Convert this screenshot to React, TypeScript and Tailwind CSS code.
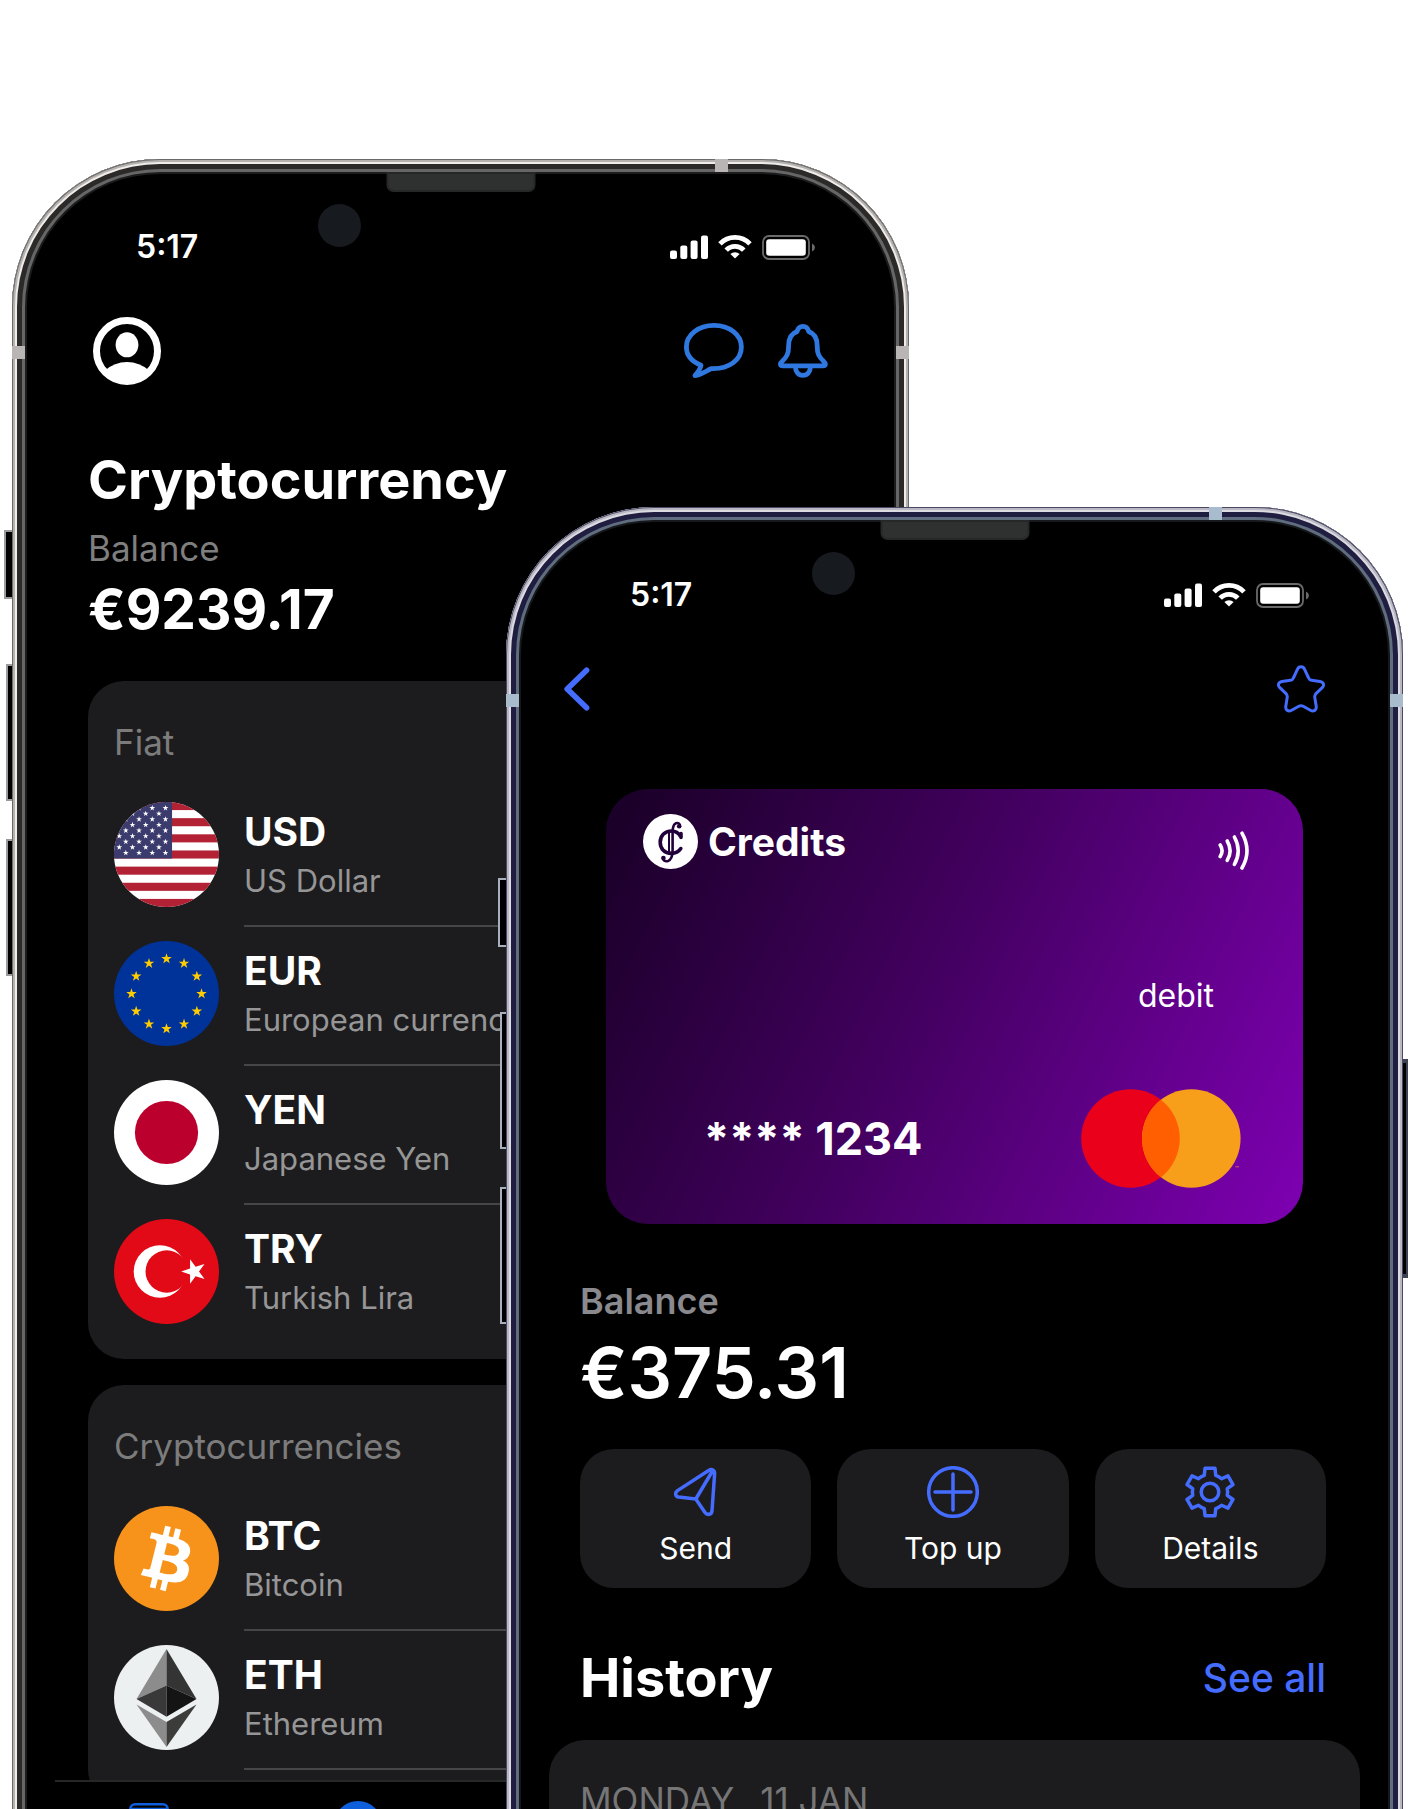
import type { ReactNode } from "react";

type Tone = "graphite" | "navy";

const frames: Record<Tone, { ring: string; band: string; key: string }> = {
  graphite: {
    ring: "shadow-[inset_0_0_0_1px_#6b6a69,inset_0_0_0_3px_#b4b1af,inset_0_0_0_5px_#efecea,inset_0_0_0_10px_#2c2a29,inset_0_0_0_13px_#676666,inset_0_0_0_15px_#1c1c1c]",
    band: "bg-[#b9b5b4]",
    key: "border-[#9b9b9b]",
  },
  navy: {
    ring: "shadow-[inset_0_0_0_1px_#4a4965,inset_0_0_0_3px_#b9b8c2,inset_0_0_0_5px_#dcdbe2,inset_0_0_0_10px_#1f1d40,inset_0_0_0_13px_#5f6d7e,inset_0_0_0_15px_#16181c]",
    band: "bg-[#a9bccd]",
    key: "border-[#a9b0bd]",
  },
};

function Phone({ tone, label, className, children }: { tone: Tone; label: string; className: string; children: ReactNode }) {
  const f = frames[tone];
  return (
    <section aria-label={label} className={`relative flex min-w-0 flex-col rounded-t-[148px] bg-black ${className}`}>
      <i className={`absolute top-[371px] -left-[8px] h-[69px] w-[9px] border-2 border-r-0 bg-black ${f.key}`} />
      <i className={`absolute top-[505px] -left-[6px] h-[137px] w-[7px] border-2 border-r-0 bg-black ${f.key}`} />
      <i className={`absolute top-[680px] -left-[6px] h-[137px] w-[7px] border-2 border-r-0 bg-black ${f.key}`} />
      <i className="absolute top-[552px] -right-[5px] h-[219px] w-[6px] border-y-4 border-r-2 border-[#3d4350] bg-black" />
      <div className={`pointer-events-none absolute inset-x-0 top-0 -bottom-10 rounded-t-[148px] ${f.ring}`} />
      <i className={`absolute top-0 right-[181px] h-[13px] w-[13px] ${f.band}`} />
      <i className={`absolute top-[187px] left-0 h-[13px] w-[13px] ${f.band}`} />
      <i className={`absolute top-[187px] right-0 h-[13px] w-[13px] ${f.band}`} />
      <i className="absolute top-[13px] left-1/2 h-[20px] w-[149px] -translate-x-1/2 rounded-b-[7px] border-2 border-[#262727] bg-[#2f3030]" />
      <i className="absolute top-[45px] left-1/2 -ml-[143px] size-[43px] rounded-full bg-[#171a1e]" />
      <StatusBar />
      {children}
    </section>
  );
}

function StatusBar() {
  return (
    <div className="flex h-[108px] shrink-0 items-end justify-between pt-[68px] pr-[94px] pl-[124px] text-white">
      <time className="text-[32px] leading-[40px] font-semibold">5:17</time>
      <div className="flex h-[40px] items-center gap-[10px]">
        <svg width="38" height="24" viewBox="0 0 38 24" fill="#fff" role="img" aria-label="Signal">
          <rect x="0" y="15.5" width="7" height="8.5" rx="2" />
          <rect x="10.3" y="10.5" width="7" height="13.5" rx="2" />
          <rect x="20.6" y="5.5" width="7" height="18.5" rx="2" />
          <rect x="31" y="0.5" width="7" height="23.5" rx="2" />
        </svg>
        <svg width="34" height="24" viewBox="0 0 34 24" fill="none" stroke="#fff" strokeWidth="4.8" role="img" aria-label="Wi-Fi">
          <path d="M2 8.8A20.8 20.8 0 0 1 32 8.8" />
          <path d="M8.2 15.2A12 12 0 0 1 25.8 15.2" />
          <path d="M17 23.5L12.4 19.1A6.6 6.6 0 0 1 21.6 19.1Z" fill="#fff" stroke="none" />
        </svg>
        <svg width="53" height="25" viewBox="0 0 53 25" role="img" aria-label="Battery">
          <rect x="1" y="1" width="46" height="23" rx="6" fill="none" stroke="#6a6a6a" strokeWidth="1.8" />
          <rect x="4.2" y="4.2" width="39.6" height="16.6" rx="3" fill="#fff" />
          <path d="M50 8.5Q53 10 53 12.5T50 16.5Z" fill="#6a6a6a" />
        </svg>
      </div>
    </div>
  );
}

function starPoints(cx: number, cy: number, r: number, turn = -90, ratio = 0.382) {
  return Array.from({ length: 10 }, (_, i) => {
    const a = ((turn + i * 36) * Math.PI) / 180;
    const q = i % 2 ? r * ratio : r;
    return `${(cx + q * Math.cos(a)).toFixed(2)},${(cy + q * Math.sin(a)).toFixed(2)}`;
  }).join(" ");
}

function Coin({ id, children }: { id: string; children: ReactNode }) {
  return (
    <svg className="size-[105px] shrink-0" viewBox="0 0 104 104" aria-hidden="true">
      <clipPath id={id}>
        <circle cx="52" cy="52" r="52" />
      </clipPath>
      <g clipPath={`url(#${id})`}>{children}</g>
    </svg>
  );
}

const UsFlag = () => (
  <Coin id="us">
    <rect width="104" height="104" fill="#fff" />
    {[0, 2, 4, 6, 8, 10, 12].map((i) => (
      <rect key={i} y={i * 8} width="104" height="8" fill="#b22234" />
    ))}
    <rect width="57.5" height="56" fill="#3c3b6e" />
    {Array.from({ length: 9 }, (_, r) =>
      [0, 1, 2, 3].map((c) => (
        <polygon key={`${r}-${c}`} fill="#fff" points={starPoints((r % 2 ? 44.5 : 51) - c * 13.1, 6 + r * 5.55, 3)} />
      )),
    )}
  </Coin>
);

const EuFlag = () => (
  <Coin id="eu">
    <rect width="104" height="104" fill="#039" />
    {Array.from({ length: 12 }, (_, i) => (
      <polygon
        key={i}
        fill="#fc0"
        points={starPoints(52 + 34.7 * Math.sin((i * Math.PI) / 6), 52.3 - 34.7 * Math.cos((i * Math.PI) / 6), 5.5)}
      />
    ))}
  </Coin>
);

const JpFlag = () => (
  <Coin id="jp">
    <rect width="104" height="104" fill="#fff" />
    <circle cx="52" cy="52" r="31.3" fill="#bc002d" />
  </Coin>
);

const TrFlag = () => (
  <Coin id="tr">
    <rect width="104" height="104" fill="#e30a17" />
    <circle cx="45.5" cy="52" r="26" fill="#fff" />
    <circle cx="52.2" cy="52" r="21" fill="#e30a17" />
    <polygon fill="#fff" points={starPoints(79.3, 52, 12.8, 180)} />
  </Coin>
);

const Btc = () => (
  <Coin id="btc">
    <rect width="104" height="104" fill="#f7931a" />
    <g transform="scale(3.25)">
      <path
        fill="#fff"
        d="M23.189 14.02c.314-2.096-1.283-3.223-3.465-3.975l.708-2.84-1.728-.43-.69 2.765c-.454-.114-.92-.22-1.385-.326l.695-2.783L15.596 6l-.708 2.839c-.376-.086-.746-.17-1.104-.26l.002-.009-2.384-.595-.46 1.846s1.283.294 1.256.312c.7.175.826.638.805 1.006l-.806 3.235c.048.012.11.03.18.057l-.183-.045-1.13 4.532c-.086.212-.303.531-.793.41.018.025-1.256-.313-1.256-.313l-.858 1.978 2.25.561c.418.105.828.215 1.231.318l-.715 2.872 1.727.43.708-2.84c.472.127.93.245 1.378.357l-.706 2.828 1.728.43.715-2.866c2.948.558 5.164.333 6.097-2.333.752-2.146-.037-3.385-1.588-4.192 1.13-.26 1.98-1.003 2.207-2.538zm-3.95 5.538c-.533 2.147-4.148.986-5.32.695l.95-3.805c1.172.293 4.929.872 4.37 3.11zm.535-5.569c-.487 1.953-3.495.96-4.47.717l.86-3.45c.975.243 4.118.696 3.61 2.733z"
      />
    </g>
  </Coin>
);

const Eth = () => (
  <Coin id="eth">
    <rect width="104" height="104" fill="#ecf0f1" />
    <path d="M52 4L22.3 53.5L52 40Z" fill="#8c8c8c" />
    <path d="M52 4L81.7 53.5L52 40Z" fill="#343434" />
    <path d="M52 40L22.3 53.5L52 71Z" fill="#393939" />
    <path d="M52 40L81.7 53.5L52 71Z" fill="#141414" />
    <path d="M22.3 59L52 76.3V101Z" fill="#8c8c8c" />
    <path d="M81.7 59L52 76.3V101Z" fill="#3c3c3b" />
  </Coin>
);

type Asset = { code: string; name: string; icon: ReactNode };

const fiat: Asset[] = [
  { code: "USD", name: "US Dollar", icon: <UsFlag /> },
  { code: "EUR", name: "European currency", icon: <EuFlag /> },
  { code: "YEN", name: "Japanese Yen", icon: <JpFlag /> },
  { code: "TRY", name: "Turkish Lira", icon: <TrFlag /> },
];

const crypto: Asset[] = [
  { code: "BTC", name: "Bitcoin", icon: <Btc /> },
  { code: "ETH", name: "Ethereum", icon: <Eth /> },
];

function AssetCard({ title, assets, open }: { title: string; assets: Asset[]; open?: boolean }) {
  return (
    <div className="rounded-[36px] bg-[#1c1c1e] px-[26px] pt-[40px] pb-[35px]">
      <h2 className="text-[35px] leading-[42px] text-[#7c7c7d]">{title}</h2>
      <ul className="mt-[39px] flex flex-col gap-[14px]">
        {assets.map((a, i) => (
          <li key={a.code} className="flex gap-[25px]">
            {a.icon}
            <div
              className={
                open || i < assets.length - 1
                  ? "h-[125px] min-w-0 flex-1 border-b-2 border-[#464648] pt-[6px]"
                  : "h-[105px] min-w-0 flex-1 pt-[6px]"
              }
            >
              <p className="text-[39px] leading-[48px] font-bold text-white">{a.code}</p>
              <p className="mt-[6px] truncate text-[31px] leading-[38px] text-[#969697]">{a.name}</p>
            </div>
          </li>
        ))}
      </ul>
    </div>
  );
}

function WalletPhone() {
  return (
    <Phone tone="graphite" label="Wallet" className="col-start-2 col-end-4 row-start-1 mt-[159px]">
      <div className="mt-[50px] flex h-[68px] shrink-0 items-center justify-between px-[81px]">
        <button type="button" aria-label="Profile">
          <svg width="68" height="68" viewBox="0 0 68 68" className="block">
            <circle cx="34" cy="34" r="30.5" fill="none" stroke="#fff" strokeWidth="7" />
            <ellipse cx="34" cy="27.8" rx="11.4" ry="12.5" fill="#fff" />
            <path d="M12 53.5Q21.5 45 34 45T56 53.5L50 62Q34 71 18 62Z" fill="#fff" />
          </svg>
        </button>
        <div className="flex items-center gap-[34px]">
          <button type="button" aria-label="Messages">
            <svg width="60" height="56" viewBox="0 0 60 56" fill="none" stroke="#2f78e0" strokeWidth="4.8" strokeLinejoin="round" className="block">
              <path d="M27.5 45.6C22.5 47.5 18 52 11 52.6C14 49 16.5 46 17 42.2C8 38.6 2.4 32 2.4 24C2.4 11.8 14.5 2.4 30 2.4C45.5 2.4 57.4 11.8 57.4 24C57.4 37 45 46.2 27.5 45.6Z" />
            </svg>
          </button>
          <button type="button" aria-label="Notifications">
            <svg width="50" height="54" viewBox="0 0 50 54" fill="none" stroke="#2f78e0" strokeWidth="4.8" strokeLinejoin="round" className="block">
              <path d="M5 41.8C2 41.8 1.6 39.6 4 37.5C9 32.5 10.6 30 10.6 22C10.6 14 13 9.5 19 7.6C20 4 22 2.4 24.9 2.4C27.8 2.4 29.8 4 30.8 7.6C36.8 9.5 39.2 14 39.2 22C39.2 30 40.8 32.5 45.8 37.5C48.2 39.6 47.8 41.8 44.8 41.8Z" />
              <path d="M17.4 42.5C17.4 48 20.5 51.4 24.9 51.4S32.4 48 32.4 42.5" />
            </svg>
          </button>
        </div>
      </div>
      <div className="flex min-h-0 flex-1 flex-col overflow-hidden px-[76px]">
        <h1 className="mt-[63px] text-[54px] leading-[64px] font-bold text-white">Cryptocurrency</h1>
        <p className="mt-[15px] text-[35px] leading-[42px] text-[#7f7f7f]">Balance</p>
        <p className="mt-[8px] text-[55px] leading-[64px] font-bold text-white">€9239.17</p>
        <div className="mt-[40px] flex flex-col gap-[26px]">
          <AssetCard title="Fiat" assets={fiat} />
          <AssetCard title="Cryptocurrencies" assets={crypto} open />
        </div>
      </div>
      <nav aria-label="Tabs" className="mx-[43px] flex h-[29px] shrink-0 items-start overflow-hidden border-t-2 border-[#262828] pt-[19px] pl-[74px]">
        <a href="#cards" aria-label="Cards">
          <svg width="40" height="30" viewBox="0 0 40 30" fill="none" stroke="#0f5fdc" strokeWidth="2.6" className="block">
            <rect x="1.3" y="3.3" width="37.4" height="25" rx="5" />
            <path d="M1.3 8H38.7" />
          </svg>
        </a>
        <a href="#crypto" aria-label="Crypto" className="ml-[165px] block size-[48px] rounded-full bg-[#0f5fdc]" />
      </nav>
    </Phone>
  );
}

const gearPath = (() => {
  const pt = (r: number, deg: number) => {
    const a = ((deg - 90) * Math.PI) / 180;
    return `${(26 + r * Math.cos(a)).toFixed(2)} ${(26 + r * Math.sin(a)).toFixed(2)}`;
  };
  const parts: string[] = [];
  for (let t = 0; t < 360; t += 60) {
    parts.push(`${t ? "L" : "M"}${pt(17.6, t - 19)}L${pt(24.2, t - 12)}L${pt(24.2, t + 12)}L${pt(17.6, t + 19)}`);
    parts.push(`A17.6 17.6 0 0 1 ${pt(17.6, t + 41)}`);
  }
  return parts.join("") + "Z";
})();

const actions = [
  {
    label: "Send",
    icon: (
      <g transform="translate(4 2)">
        <path d="M35 2.3L3.5 22.6C.6 24.6 1.2 28.6 4.6 29.1L21.8 31L31 44.5C33.2 47.6 37.6 46.6 38 43L40.6 6C40.8 2.2 37.8 .6 35 2.3ZM21.8 31L38.2 3.5" />
      </g>
    ),
  },
  {
    label: "Top up",
    icon: (
      <>
        <circle cx="26" cy="26" r="24.3" />
        <path d="M26 8V44M8 26H44" strokeLinecap="round" />
      </>
    ),
  },
  {
    label: "Details",
    icon: (
      <>
        <path d={gearPath} />
        <circle cx="26" cy="26" r="8.8" />
      </>
    ),
  },
];

function BankCard() {
  return (
    <div className="mx-[100px] mt-[76px] flex h-[435px] shrink-0 flex-col rounded-[42px] bg-[linear-gradient(116deg,#1b0029_3%,#430060_46%,#7b00ae_97%)] pt-[25px] text-white">
      <div className="flex items-start justify-between pr-[53px] pl-[37px]">
        <div className="flex items-center gap-[10px]">
          <svg width="55" height="55" viewBox="0 0 55 55" aria-hidden="true">
            <circle cx="27.5" cy="27.5" r="27.5" fill="#fff" />
            <g fill="none" stroke="#22003a" strokeLinecap="round">
              <path d="M38 19.5V23.5M37.5 22.5C35.5 18.8 32 17 28.5 17C21.5 17 17.2 22 17.2 28.2C17.2 34.6 21.5 39.4 28.5 39.4C32.5 39.4 35.8 37.6 37.8 34.6" strokeWidth="3.6" />
              <path d="M36.8 12.6C37.6 9.6 35 8.6 33 9.2C29.8 10.4 29.6 14 29.6 18V36C29.6 42 28.6 45.6 25 47C22.4 47.8 19.4 46.6 20.2 43.4" strokeWidth="2.6" />
              <path d="M26 18V38" strokeWidth="2" />
            </g>
            <circle cx="36.2" cy="12.2" r="2.3" fill="#22003a" />
            <circle cx="20.4" cy="44" r="2.3" fill="#22003a" />
          </svg>
          <span className="text-[39px] leading-[48px] font-bold">Credits</span>
        </div>
        <svg width="32" height="39" viewBox="0 0 32 39" fill="none" stroke="#fff" strokeWidth="3.6" strokeLinecap="round" className="mt-[17px]" role="img" aria-label="Contactless">
          <path d="M2.2 14Q6 19.8 2.2 25.6" />
          <path d="M9.2 10Q15 19.8 9.2 29.4" />
          <path d="M16.4 6Q24 19.8 16.4 33.4" />
          <path d="M24 2.2Q34 19.8 24 37" />
        </svg>
      </div>
      <p className="mt-[108px] pr-[89px] text-right text-[32px] leading-[36px]">debit</p>
      <div className="mt-[75px] flex items-center justify-between pr-[61px] pl-[98px]">
        <span className="text-[45px] leading-[48px] font-bold">**** 1234</span>
        <svg width="161" height="99" viewBox="0 0 161 99" role="img" aria-label="Mastercard">
          <circle cx="49.5" cy="49.5" r="49.3" fill="#eb001b" />
          <circle cx="110.3" cy="49.5" r="49.3" fill="#f79e1b" />
          <path d="M79.9 10.7A49.3 49.3 0 0 1 79.9 88.3A49.3 49.3 0 0 1 79.9 10.7Z" fill="#ff5f00" />
          <text x="154" y="82" fontSize="6" fill="#f79e1b">™</text>
        </svg>
      </div>
    </div>
  );
}

function CardPhone() {
  return (
    <Phone tone="navy" label="Card" className="col-start-3 col-end-5 row-start-1 mt-[507px]">
      <div className="mt-[50px] flex h-[48px] shrink-0 items-center justify-between pr-[78px] pl-[58px]">
        <button type="button" aria-label="Back">
          <svg width="27" height="44" viewBox="0 0 27 44" fill="none" stroke="#446cff" strokeWidth="5.6" strokeLinecap="round" strokeLinejoin="round" className="block">
            <path d="M22.6 3.2L3.2 22L22.6 40.8" />
          </svg>
        </button>
        <button type="button" aria-label="Favourite">
          <svg width="48" height="48" viewBox="0 0 48 48" fill="none" stroke="#446cff" strokeWidth="3" strokeLinejoin="round" className="block">
            <path d="M20.4 4.4C21.8 1 26.2 1 27.6 4.4L31.6 13Q32.4 15 34.6 15.3L43 16.6C46.8 17.2 47.6 20.4 45 22.9L39.2 28.4Q37.4 30.2 37.8 32.4L39.2 41.2C39.8 45.2 36.6 47 33.4 45.2L26.2 41.3Q24 40.1 21.8 41.3L14.6 45.2C11.4 47 8.2 45.2 8.8 41.2L10.2 32.4Q10.6 30.2 8.8 28.4L3 22.9C.4 20.4 1.2 17.2 5 16.6L13.4 15.3Q15.6 15 16.4 13Z" />
          </svg>
        </button>
      </div>
      <BankCard />
      <div className="shrink-0 pr-[77px] pl-[74px]">
        <p className="mt-[56px] text-[36px] leading-[42px] font-semibold text-[#8a898e]">Balance</p>
        <p className="mt-[11px] text-[70px] leading-[80px] font-semibold text-white">€375.31</p>
        <div className="mt-[36px] grid grid-cols-3 gap-[26px]">
          {actions.map((a) => (
            <button key={a.label} type="button" className="flex h-[139px] flex-col items-center rounded-[34px] bg-[#1c1c1e] pt-[17px]">
              <svg width="52" height="52" viewBox="0 0 52 52" fill="none" stroke="#446cff" strokeWidth="3.5" strokeLinejoin="round" aria-hidden="true">
                {a.icon}
              </svg>
              <span className="mt-[12px] text-[30px] leading-[36px] text-white">{a.label}</span>
            </button>
          ))}
        </div>
        <div className="mt-[58px] flex items-center justify-between">
          <h2 className="text-[54px] leading-[64px] font-bold text-white">History</h2>
          <a href="#history" className="text-[39px] leading-[48px] font-medium text-[#446cff]">
            See all
          </a>
        </div>
      </div>
      <div className="mx-[43px] mt-[30px] min-h-0 flex-1 overflow-hidden rounded-t-[36px] bg-[#1c1c1e] px-[31px] pt-[39px]">
        <h3 className="flex gap-[26px] text-[35px] leading-[42px] text-[#767677]">
          <span>MONDAY</span>
          <span>11 JAN</span>
        </h3>
      </div>
    </Phone>
  );
}

export default function App() {
  return (
    <main className="grid h-screen grid-cols-[minmax(0,12fr)_minmax(0,494fr)_minmax(0,403fr)_minmax(0,494fr)_minmax(0,7fr)] grid-rows-[minmax(0,1fr)] overflow-hidden bg-white font-[Inter,sans-serif]">
      <WalletPhone />
      <CardPhone />
    </main>
  );
}
